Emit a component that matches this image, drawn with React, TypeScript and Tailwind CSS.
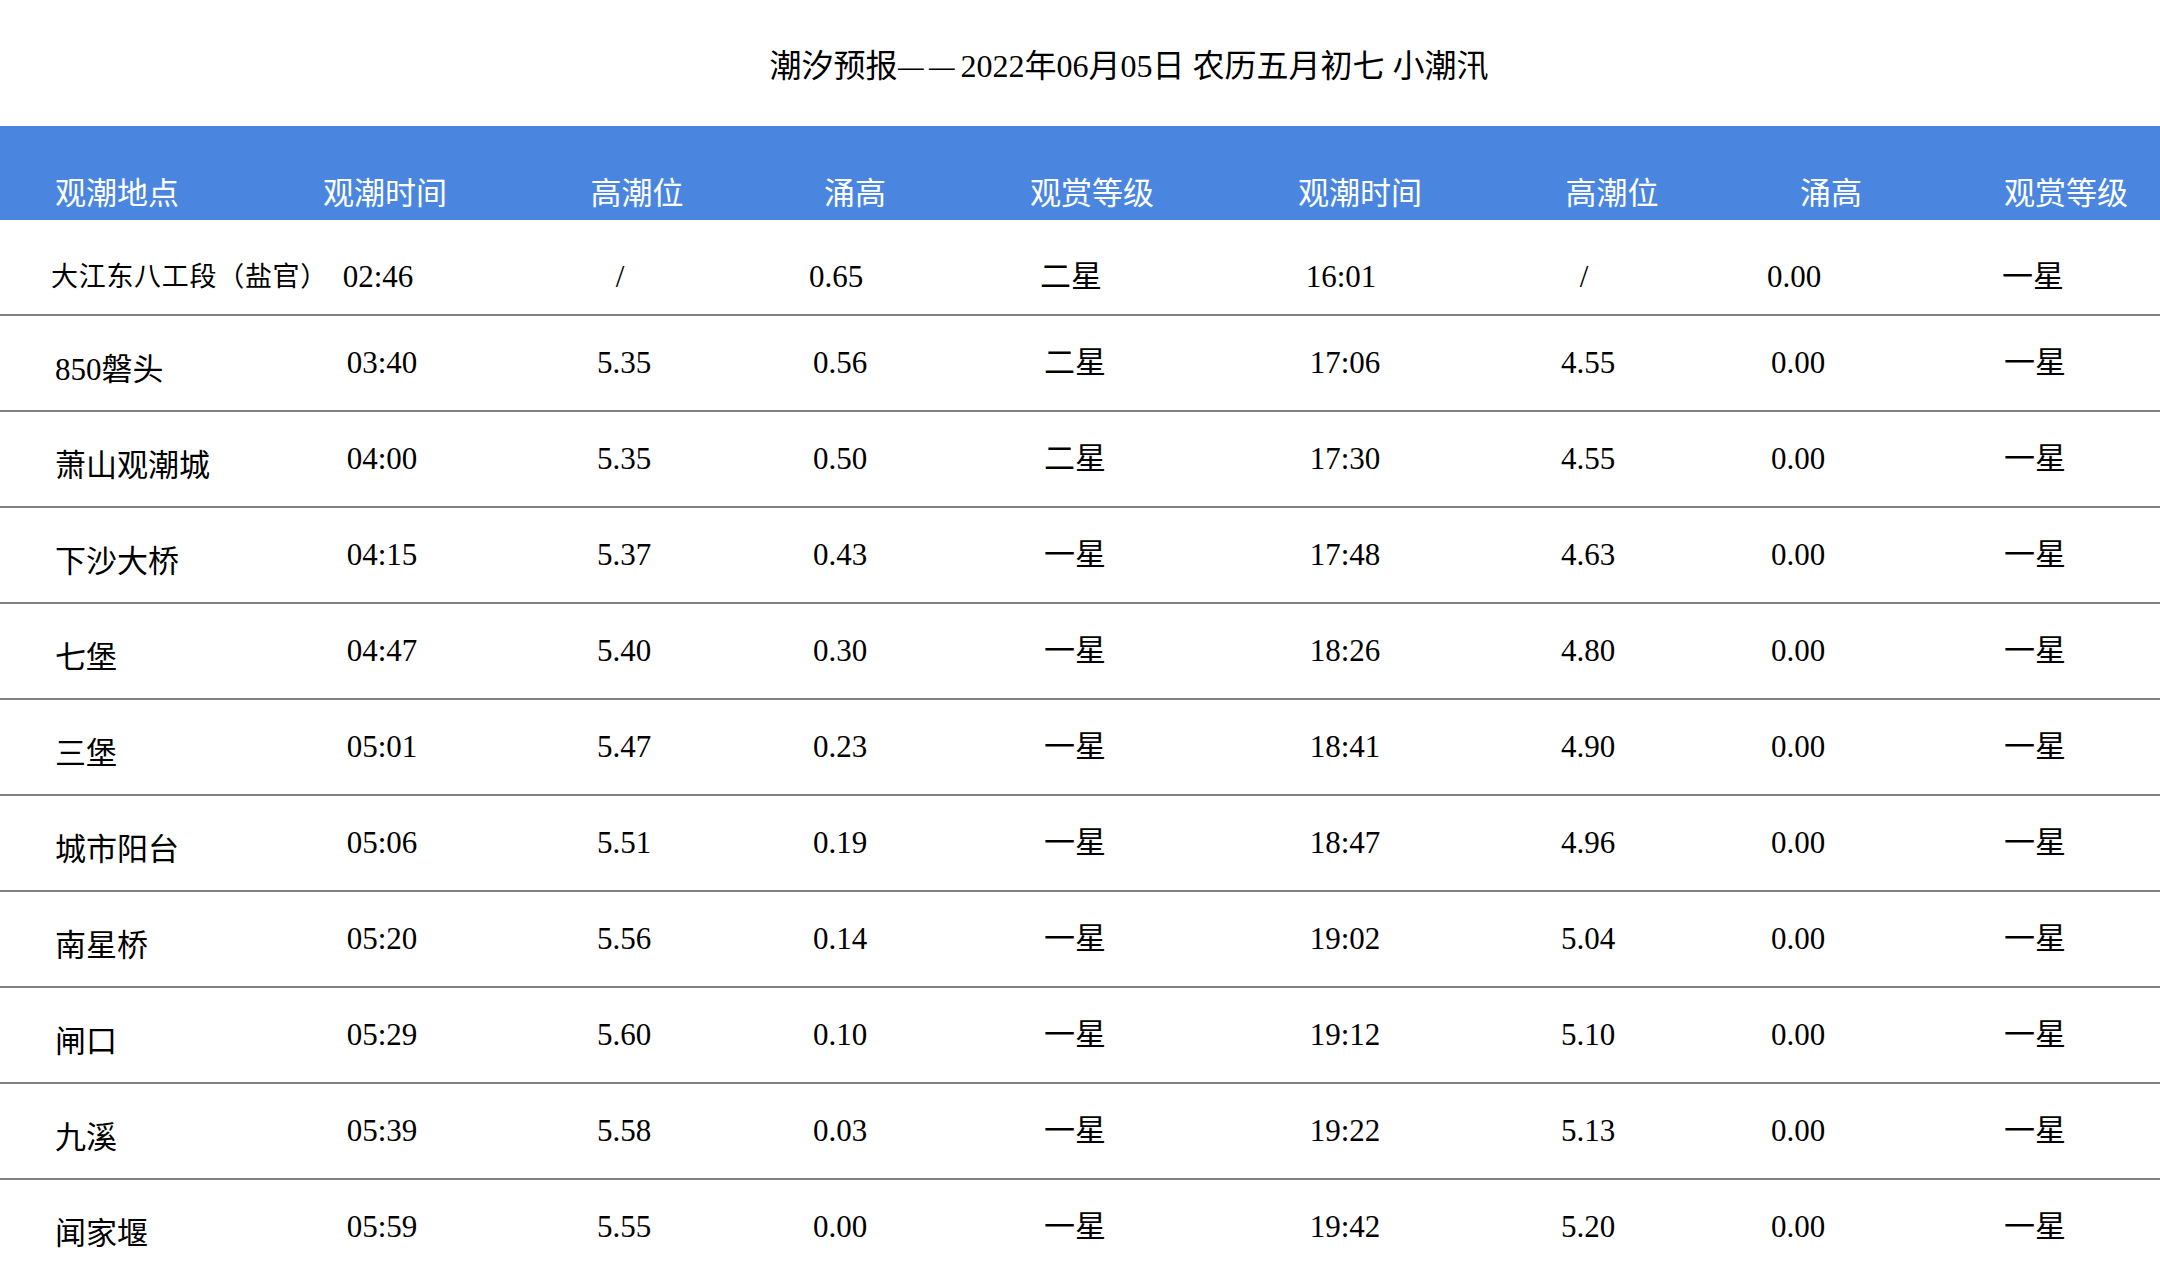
import React from "react";

type TideRow = {
  place: string;
  time1: string;
  level1: string;
  surge1: string;
  grade1: string;
  time2: string;
  level2: string;
  surge2: string;
  grade2: string;
};

const serif = "font-['Liberation_Serif','Noto_Sans_CJK_SC',serif]";
const sans = "font-['Noto_Sans_CJK_SC','Noto_Sans',sans-serif]";

const headers = ["观潮地点", "观潮时间", "高潮位", "涌高", "观赏等级", "观潮时间", "高潮位", "涌高", "观赏等级"];

const rows: TideRow[] = [
  { place: "大江东八工段（盐官）", time1: "02:46", level1: "/", surge1: "0.65", grade1: "二星", time2: "16:01", level2: "/", surge2: "0.00", grade2: "一星" },
  { place: "850磐头", time1: "03:40", level1: "5.35", surge1: "0.56", grade1: "二星", time2: "17:06", level2: "4.55", surge2: "0.00", grade2: "一星" },
  { place: "萧山观潮城", time1: "04:00", level1: "5.35", surge1: "0.50", grade1: "二星", time2: "17:30", level2: "4.55", surge2: "0.00", grade2: "一星" },
  { place: "下沙大桥", time1: "04:15", level1: "5.37", surge1: "0.43", grade1: "一星", time2: "17:48", level2: "4.63", surge2: "0.00", grade2: "一星" },
  { place: "七堡", time1: "04:47", level1: "5.40", surge1: "0.30", grade1: "一星", time2: "18:26", level2: "4.80", surge2: "0.00", grade2: "一星" },
  { place: "三堡", time1: "05:01", level1: "5.47", surge1: "0.23", grade1: "一星", time2: "18:41", level2: "4.90", surge2: "0.00", grade2: "一星" },
  { place: "城市阳台", time1: "05:06", level1: "5.51", surge1: "0.19", grade1: "一星", time2: "18:47", level2: "4.96", surge2: "0.00", grade2: "一星" },
  { place: "南星桥", time1: "05:20", level1: "5.56", surge1: "0.14", grade1: "一星", time2: "19:02", level2: "5.04", surge2: "0.00", grade2: "一星" },
  { place: "闸口", time1: "05:29", level1: "5.60", surge1: "0.10", grade1: "一星", time2: "19:12", level2: "5.10", surge2: "0.00", grade2: "一星" },
  { place: "九溪", time1: "05:39", level1: "5.58", surge1: "0.03", grade1: "一星", time2: "19:22", level2: "5.13", surge2: "0.00", grade2: "一星" },
  { place: "闻家堰", time1: "05:59", level1: "5.55", surge1: "0.00", grade1: "一星", time2: "19:42", level2: "5.20", surge2: "0.00", grade2: "一星" },
];

// the title's two dashes are drawn a little narrower, with a gap between them
const Dash = (): JSX.Element => (
  <span className="inline-block w-[31.5px]">
    <span className="inline-block origin-left scale-x-[0.8]">—</span>
  </span>
);

const App = (): JSX.Element => {
  const renderHeader = (): JSX.Element => (
    <div className="grid h-[94px] grid-cols-[230px_310px_194px_242px_232px_304px_200px_238px_210px] bg-[#4a86e0] text-white">
      {headers.map((title, index) => (
        <div
          key={index}
          className={`flex items-center pt-[36px] text-[31px] whitespace-nowrap ${sans} ${
            index === 0 ? "pl-[55px]" : index === 8 ? "pl-[54px]" : "justify-center"
          }`}
        >
          {title}
        </div>
      ))}
    </div>
  );

  const renderRow = (row: TideRow, index: number): JSX.Element => {
    const isFirst = index === 0;
    const cells = [row.time1, row.level1, row.surge1, row.grade1, row.time2, row.level2, row.surge2, row.grade2];
    return (
      <div
        key={row.place}
        className={`grid h-[96px] border-b-2 border-[#808080] ${
          isFirst
            ? "grid-cols-[242px_272px_212px_220px_250px_290px_196px_224px_254px] pt-[20px]"
            : "grid-cols-[246px_272px_212px_220px_250px_290px_196px_224px_250px]"
        }`}
      >
        <div
          className={`flex items-center whitespace-nowrap ${
            isFirst ? "pl-[51px] text-[27px] tracking-[0.7px]" : "pl-[55px] pt-[15px] text-[31px]"
          }`}
        >
          {row.place}
        </div>
        {cells.map((value, i) => (
          <div key={i} className="flex items-center justify-center text-[31px] whitespace-nowrap">
            {value}
          </div>
        ))}
      </div>
    );
  };

  return (
    <div className={`w-[2160px] bg-white text-black ${serif}`}>
      <div className="flex h-[126px] items-center justify-center pl-[98px] pt-[6px]">
        <h1 className="text-[32px] font-normal whitespace-nowrap">
          潮汐预报
          <Dash />
          <Dash />
          2022年06月05日 农历五月初七 小潮汛
        </h1>
      </div>
      {renderHeader()}
      <div>{rows.map((row, index) => renderRow(row, index))}</div>
    </div>
  );
};

export default App;
